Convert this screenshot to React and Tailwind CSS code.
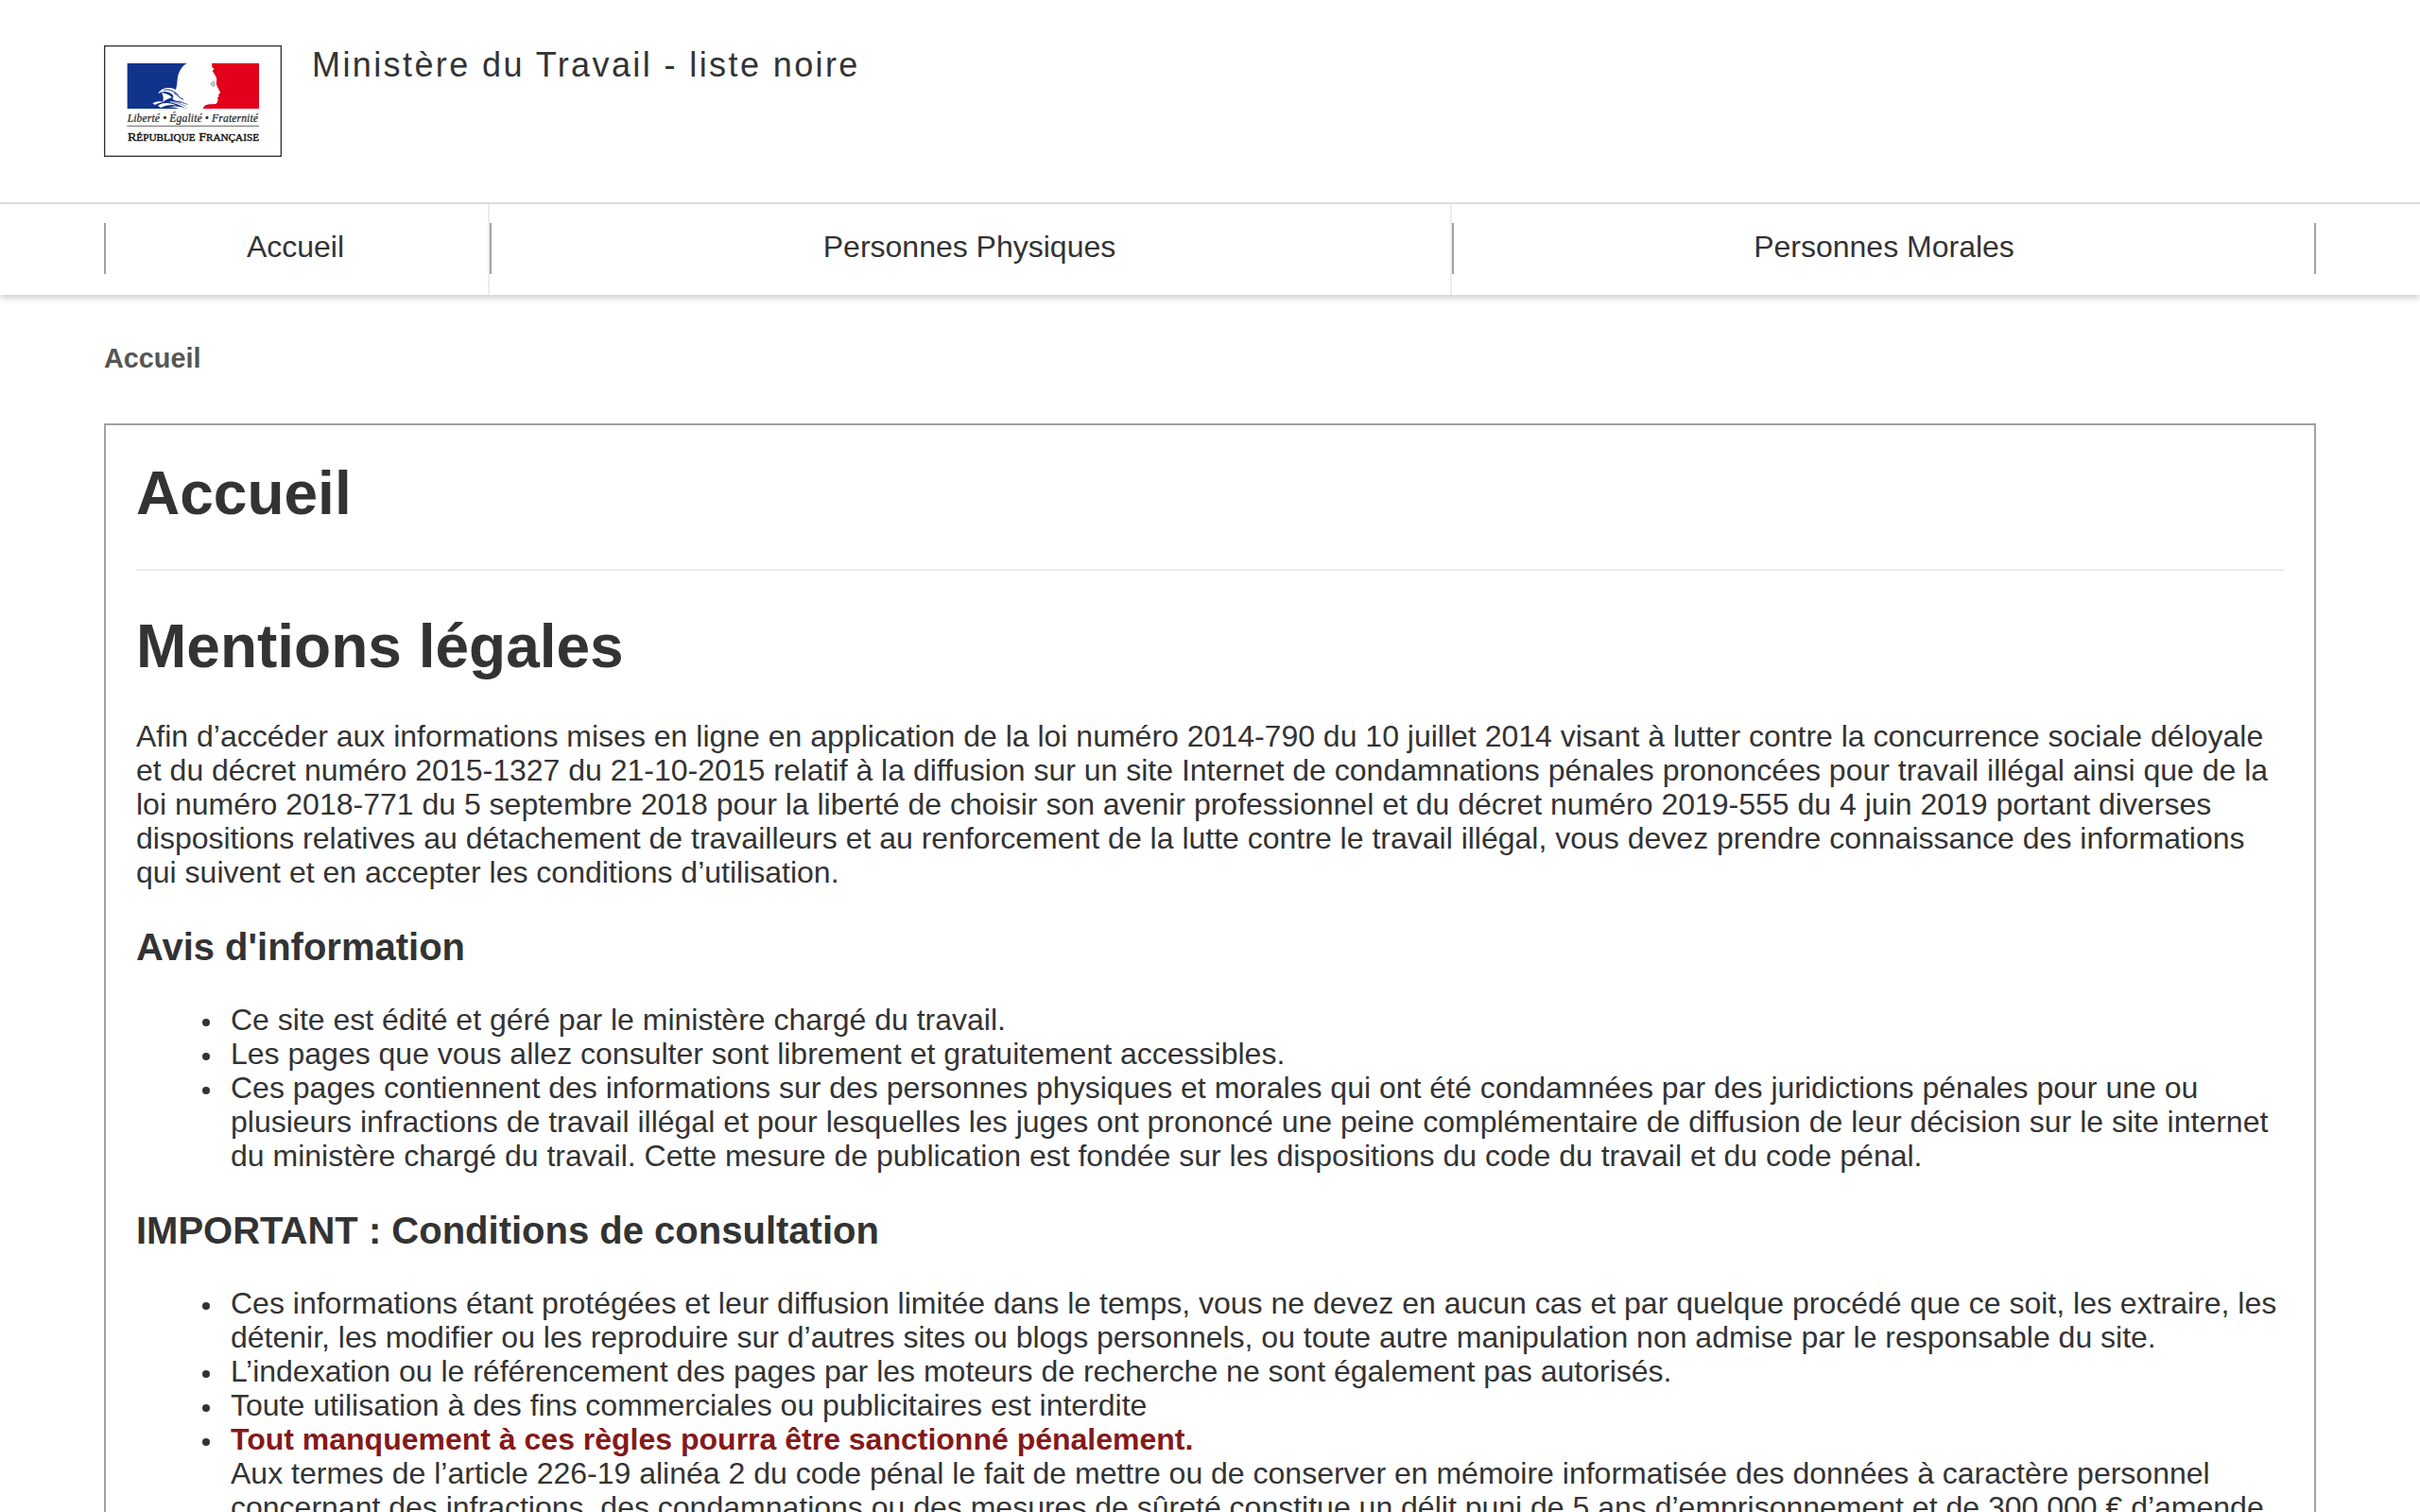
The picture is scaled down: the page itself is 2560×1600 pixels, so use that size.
const avis = [
  "Ce site est édité et géré par le ministère chargé du travail.",
  "Les pages que vous allez consulter sont librement et gratuitement accessibles.",
  "Ces pages contiennent des informations sur des personnes physiques et morales qui ont été condamnées par des juridictions pénales pour une ou plusieurs infractions de travail illégal et pour lesquelles les juges ont prononcé une peine complémentaire de diffusion de leur décision sur le site internet du ministère chargé du travail. Cette mesure de publication est fondée sur les dispositions du code du travail et du code pénal.",
];

const conditions = [
  "Ces informations étant protégées et leur diffusion limitée dans le temps, vous ne devez en aucun cas et par quelque procédé que ce soit, les extraire, les détenir, les modifier ou les reproduire sur d’autres sites ou blogs personnels, ou toute autre manipulation non admise par le responsable du site.",
  "L’indexation ou le référencement des pages par les moteurs de recherche ne sont également pas autorisés.",
  "Toute utilisation à des fins commerciales ou publicitaires est interdite",
];

const bullet =
  "before:-ml-[30px] before:mr-[22px] before:inline-block before:size-2 before:rounded-full before:bg-[#333] before:align-[4px] before:content-['']";

function Logo() {
  return (
    <svg viewBox="0 0 564 354" className="h-[118px] w-[188px] shrink-0" role="img" aria-label="République Française">
      <rect x="2" y="2" width="560" height="350" fill="#fff" stroke="#333" strokeWidth="4" />
      {/* flag */}
      <path d="M74 57H263C250 64 241 76 236 92C231 108 234 124 227 143L229 152L238 160L247 172L262 186L268 196L262 201H74Z" fill="#10338c" />
      <path d="M342 57H492V201H315C316 192 324 188 336 187C350 186 358 187 360 180L362 171L359 167L365 162L363 157L369 151C368 144 359 132 357 123C355 114 360 110 356 101C352 93 348 89 344 81L350 75L343 69Z" fill="#e2001a" />
      {/* hair and ribbon strokes */}
      <path d="M172 154C176 141 192 133 209 135C222 136 230 141 240 152L246 164L262 186L238 178C226 176 222 173 217 170C225 163 218 152 200 148C188 146 180 149 172 154Z" fill="#fff" />
      <path d="M183 151C196 152 207 157 216 165C206 169 196 172 187 180C190 169 188 160 183 151Z" fill="#fff" />
      <path d="M190 142C206 138 222 144 236 158M222 151C232 158 240 166 252 172" fill="none" stroke="#10338c" strokeWidth="3" />
      <path d="M154 184C166 177 178 176 190 180C180 181 172 184 162 189ZM171 191C190 179 212 182 230 191C214 187 196 190 180 198ZM206 196C225 190 246 195 264 201H238C230 198 218 196 206 196Z" fill="#fff" />
      <path d="M206 179C224 176 245 182 262 186C270 190 272 196 268 201C256 200 244 188 206 179Z" fill="#fff" />
      <path d="M236 176C246 180 256 184 266 188M216 179C232 181 246 187 260 193" fill="none" stroke="#5f76ad" strokeWidth="2.5" />
      <path d="M337 121C342 116 348 115 353 117M340 124L350 121L350 129C346 131 342 129 340 124" fill="none" stroke="#777" strokeWidth="2.5" />
      {/* motto */}
      <text x="74" y="244" textLength="415" lengthAdjust="spacing" fontFamily="Liberation Serif, serif" fontStyle="italic" fontSize="35" fill="#222" stroke="#222" strokeWidth="0.6">
        Liberté • Égalité • Fraternité
      </text>
      <rect x="73" y="254.5" width="419" height="3" fill="#666" />
      <text x="75" y="302" textLength="417" lengthAdjust="spacingAndGlyphs" fontFamily="Liberation Serif, serif" fontSize="40" fill="#111" stroke="#111" strokeWidth="1.2">
        R<tspan fontSize="32">ÉPUBLIQUE</tspan> F<tspan fontSize="32">RANÇAISE</tspan>
      </text>
    </svg>
  );
}

function NavItem({ label, className, last }) {
  return (
    <li className={"flex h-24 items-start pt-5 " + className + (last ? "" : " border-r-2 border-[#ececec]")}>
      <a
        href="#"
        className={
          "block h-[54px] w-full border-l-2 border-[#a2a2a2] pt-[7px] text-center leading-9" +
          (last ? " border-r-2" : " pr-[3px]")
        }
      >
        {label}
      </a>
    </li>
  );
}

export default function App() {
  return (
    <div className="h-[1600px] w-[2560px] overflow-hidden bg-white font-['Liberation_Sans',sans-serif] text-[32px] leading-9 text-[#333]">
      <header className="flex h-[214px] items-start px-[110px] pt-12">
        <Logo />
        <p className="ml-8 text-[36px] leading-[41px] tracking-[2.4px]">Ministère du Travail - liste noire</p>
      </header>
      <nav className="h-[98px] border-t-2 border-[#ddd] px-[110px] shadow-[0_4px_6px_rgba(0,0,0,0.17)]">
        <ul className="flex">
          <NavItem label="Accueil" className="w-[408px]" />
          <NavItem label="Personnes Physiques" className="w-[1018px]" />
          <NavItem label="Personnes Morales" className="w-[914px]" last />
        </ul>
      </nav>
      <main className="px-[110px] pt-[51px]">
        <p className="text-[28.8px] leading-8 font-bold text-[#555]">Accueil</p>
        <section className="mt-[53px] border-2 border-[#a2a2a2] px-8 pt-9 pb-8">
          <h1 className="text-[64px] leading-[72px] font-bold">Accueil</h1>
          <hr className="mt-11 border-t-2 border-[#ebebeb]" />
          <h1 className="mt-11 text-[64px] leading-[72px] font-bold">Mentions légales</h1>
          <p className="mt-[41px]">
            Afin d’accéder aux informations mises en ligne en application de la loi numéro 2014-790 du 10 juillet 2014
            visant à lutter contre la concurrence sociale déloyale et du décret numéro 2015-1327 du 21-10-2015 relatif à
            la diffusion sur un site Internet de condamnations pénales prononcées pour travail illégal ainsi que de la
            loi numéro 2018-771 du 5 septembre 2018 pour la liberté de choisir son avenir professionnel et du décret
            numéro 2019-555 du 4 juin 2019 portant diverses dispositions relatives au détachement de travailleurs et au
            renforcement de la lutte contre le travail illégal, vous devez prendre connaissance des informations qui
            suivent et en accepter les conditions d’utilisation.
          </p>
          <h2 className="mt-[39px] text-[40px] leading-[44px] font-bold">Avis d'information</h2>
          <ul className="mt-[37px] pl-[100px]">
            {avis.map((t) => (
              <li key={t} className={bullet}>
                {t}
              </li>
            ))}
          </ul>
          <h2 className="mt-[39px] text-[40px] leading-[44px] font-bold">IMPORTANT : Conditions de consultation</h2>
          <ul className="mt-[37px] pl-[100px]">
            {conditions.map((t) => (
              <li key={t} className={bullet}>
                {t}
              </li>
            ))}
            <li className={bullet}>
              <strong className="font-bold text-[#851919]">
                Tout manquement à ces règles pourra être sanctionné pénalement.
              </strong>
              <br />
              Aux termes de l’article 226-19 alinéa 2 du code pénal le fait de mettre ou de conserver en mémoire
              informatisée des données à caractère personnel concernant des infractions, des condamnations ou des
              mesures de sûreté constitue un délit puni de 5 ans d’emprisonnement et de 300 000 € d’amende
            </li>
          </ul>
        </section>
      </main>
    </div>
  );
}
